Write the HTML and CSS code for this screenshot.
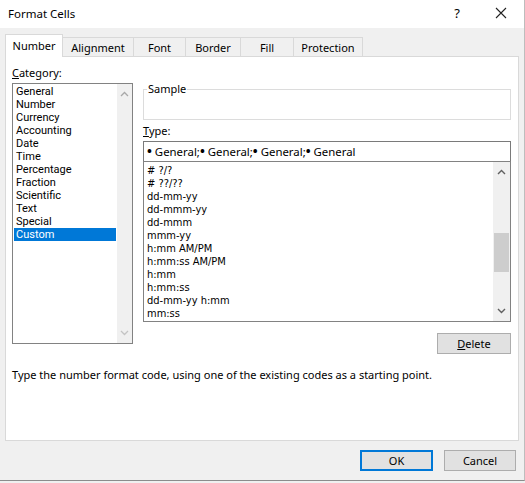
FILE: index.html
```html
<!DOCTYPE html>
<html>
<head>
<meta charset="utf-8">
<link rel="stylesheet" href="styles.css">
</head>
<body>
<div class="dialog">
  <div class="titlebar">
    <span class="title">Format Cells</span>
    <span class="help">?</span>
    <span class="close"><svg width="12" height="12" viewBox="0 0 12 12"><path d="M1 1 L11 11 M11 1 L1 11" stroke="#222" stroke-width="1.1" fill="none"/></svg></span>
  </div>
  <div class="tabs">
    <div class="tab active w-number">Number</div>
    <div class="tab w-align">Alignment</div>
    <div class="tab w-font">Font</div>
    <div class="tab w-border">Border</div>
    <div class="tab w-fill">Fill</div>
    <div class="tab w-prot last">Protection</div>
  </div>
  <div class="panel">
    <div class="columns">
      <div class="leftcol">
        <div class="label"><u>C</u>ategory:</div>
        <div class="catlist">
          <div class="catitems">
            <div class="item">General</div>
            <div class="item">Number</div>
            <div class="item">Currency</div>
            <div class="item">Accounting</div>
            <div class="item">Date</div>
            <div class="item">Time</div>
            <div class="item">Percentage</div>
            <div class="item">Fraction</div>
            <div class="item">Scientific</div>
            <div class="item">Text</div>
            <div class="item">Special</div>
            <div class="item selected">Custom</div>
          </div>
          <div class="scroll cat-scroll">
            <svg class="arrow" width="9" height="6" viewBox="0 0 9 6"><path d="M1 5 L4.5 1.5 L8 5" stroke="#a8a8a8" stroke-width="1.3" fill="none"/></svg>
            <div class="spacer"></div>
            <svg class="arrow" width="9" height="6" viewBox="0 0 9 6"><path d="M1 1 L4.5 4.5 L8 1" stroke="#c4c4c4" stroke-width="1.3" fill="none"/></svg>
          </div>
        </div>
      </div>
      <div class="rightcol">
        <fieldset class="sample">
          <legend>Sample</legend>
          <div class="sample-body"></div>
        </fieldset>
        <div class="label type-label"><u>T</u>ype:</div>
        <div class="typeinput"><span class="dot">•</span> General;<span class="dot">•</span> General;<span class="dot">•</span> General;<span class="dot">•</span> General</div>
        <div class="fmtlist">
          <div class="fmtitems">
            <div class="fitem"># ?/?</div>
            <div class="fitem"># ??/??</div>
            <div class="fitem">dd-mm-yy</div>
            <div class="fitem">dd-mmm-yy</div>
            <div class="fitem">dd-mmm</div>
            <div class="fitem">mmm-yy</div>
            <div class="fitem">h:mm AM/PM</div>
            <div class="fitem">h:mm:ss AM/PM</div>
            <div class="fitem">h:mm</div>
            <div class="fitem">h:mm:ss</div>
            <div class="fitem">dd-mm-yy h:mm</div>
            <div class="fitem">mm:ss</div>
          </div>
          <div class="scroll fmt-scroll">
            <svg class="arrow" width="9" height="6" viewBox="0 0 9 6"><path d="M1 5 L4.5 1.5 L8 5" stroke="#606060" stroke-width="1.4" fill="none"/></svg>
            <div class="track-top"></div>
            <div class="thumb"></div>
            <div class="spacer"></div>
            <svg class="arrow" width="9" height="6" viewBox="0 0 9 6"><path d="M1 1 L4.5 4.5 L8 1" stroke="#606060" stroke-width="1.4" fill="none"/></svg>
          </div>
        </div>
        <div class="delete-row">
          <div class="btn delete"><u>D</u>elete</div>
        </div>
      </div>
    </div>
    <div class="hint">Type the number format code, using one of the existing codes as a starting point.</div>
  </div>
  <div class="footer">
    <div class="btn ok">OK</div>
    <div class="btn cancel">Cancel</div>
  </div>
</div>
</body>
</html>
```

FILE: styles.css
```css
* { box-sizing: border-box; }
html, body {
  margin: 0;
  padding: 0;
  width: 525px;
  height: 483px;
  overflow: hidden;
  background: #f0f0f0;
}
body {
  font-family: "Noto Sans", "Open Sans", sans-serif;
  font-size: 11px;
  color: #000;
}
.dialog {
  width: 525px;
  height: 481px;
  background: #f0f0f0;
  border-right: 1px solid #bdbdbd;
  border-bottom: 1px solid #8c8c8c;
  display: flex;
  flex-direction: column;
}
.titlebar {
  height: 28px;
  background: #ffffff;
  display: flex;
  align-items: center;
  padding-left: 8px;
  font-size: 11.5px;
}
.title { flex: 1; padding-bottom: 2px; }
.help {
  width: 20px;
  text-align: center;
  font-size: 13px;
  margin-right: 24px;
  padding-bottom: 2px;
}
.close {
  width: 20px;
  margin-right: 13px;
  display: flex;
  justify-content: center;
  padding-bottom: 2px;
}
.tabs {
  height: 28px;
  display: flex;
  align-items: flex-end;
  padding-left: 5px;
  position: relative;
  z-index: 2;
}
.tab {
  height: 19px;
  border: 1px solid #d9d9d9;
  border-bottom: none;
  border-right: none;
  background: #f0f0f0;
  display: flex;
  align-items: center;
  justify-content: center;
}
.tab.last { border-right: 1px solid #d9d9d9; }
.tab.active {
  height: 23px;
  background: #ffffff;
  border-right: 1px solid #d9d9d9;
  margin-bottom: -1px;
  padding-bottom: 2px;
}
.tab.active + .tab { border-left: none; }
.w-number { width: 58px; }
.w-align { width: 70px; }
.w-font { width: 52px; }
.w-border { width: 55px; }
.w-fill { width: 53px; }
.w-prot { width: 70px; }
.panel {
  margin-left: 5px;
  width: 514px;
  height: 385px;
  background: #ffffff;
  border: 1px solid #d9d9d9;
  padding: 9px 0 0 6px;
  display: flex;
  flex-direction: column;
}
.columns {
  display: flex;
  align-items: flex-start;
}
.leftcol {
  width: 121px;
  display: flex;
  flex-direction: column;
}
.label {
  height: 14px;
  line-height: 14px;
}
.catlist {
  margin-top: 3px;
  height: 261px;
  border: 1px solid #828282;
  display: flex;
}
.catitems {
  flex: 1;
  padding: 1px 1px 0 1px;
  font-family: Roboto, "Noto Sans", sans-serif;
  font-size: 11px;
}
.item {
  height: 13px;
  line-height: 13px;
  padding-left: 2px;
  white-space: nowrap;
}
.item.selected {
  background: #0078d7;
  color: #ffffff;
}
.scroll {
  width: 16px;
  background: #f0f0f0;
  display: flex;
  flex-direction: column;
  align-items: center;
}
.cat-scroll { width: 15px; }
.arrow { flex: none; margin: 7px 0; }
.spacer { flex: 1; }
.rightcol {
  width: 368px;
  margin-left: 10px;
  display: flex;
  flex-direction: column;
}
.sample {
  margin: 16px 0 0 0;
  padding: 0 0 0 3px;
  border: 1px solid #dcdcdc;
  min-width: 0;
}
.sample legend {
  padding: 0 1px;
  height: 14px;
  line-height: 14px;
}
.sample-body { height: 23px; }
.type-label { margin-top: 4px; }
.typeinput {
  margin-top: 3px;
  height: 21px;
  border: 1px solid #7a7a7a;
  line-height: 19px;
  padding-left: 3px;
  white-space: nowrap;
  font-size: 11.4px;
}
.dot {
  font-weight: bold;
  font-size: 13px;
  line-height: 10px;
}
.fmtlist {
  margin-top: -1px;
  height: 161px;
  border: 1px solid #828282;
  display: flex;
}
.fmtitems {
  flex: 1;
  padding: 2px 0 0 3px;
  font-family: "DejaVu Sans Condensed", "DejaVu Sans", sans-serif;
  font-size: 11px;
}
.fitem {
  height: 13px;
  line-height: 13px;
  white-space: nowrap;
}
.fmt-scroll { width: 17px; }
.track-top { height: 51px; }
.thumb {
  width: 15px;
  height: 39px;
  background: #cdcdcd;
}
.delete-row {
  display: flex;
  justify-content: flex-end;
  margin-top: 11px;
}
.btn {
  height: 21px;
  background: #e1e1e1;
  border: 1px solid #adadad;
  display: flex;
  align-items: center;
  justify-content: center;
}
.delete { width: 74px; }
.hint {
  margin-top: 14px;
  line-height: 14px;
  height: 14px;
  white-space: nowrap;
}
.footer {
  display: flex;
  justify-content: flex-end;
  gap: 11px;
  padding-right: 8px;
  margin-top: 9px;
}
.ok {
  width: 73px;
  border: 2px solid #0078d7;
}
.cancel { width: 72px; }
```
